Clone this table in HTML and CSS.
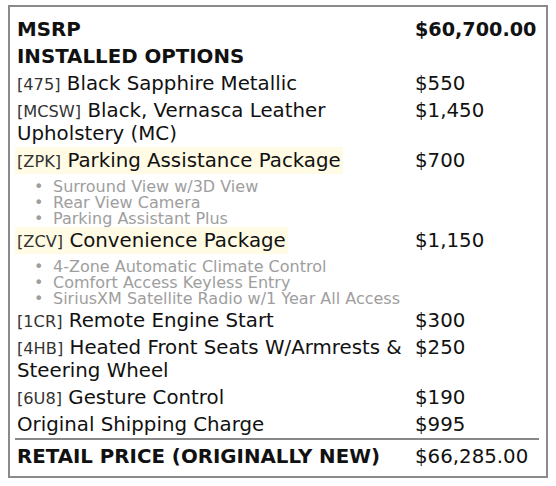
FILE: index.html
```html
<!DOCTYPE html>
<html>
<head>
<meta charset="utf-8">
<link rel="stylesheet" href="styles.css">
</head>
<body>
<div class="box">
  <div class="sheet">
    <div class="row head"><div class="name">MSRP</div><div class="price">$60,700.00</div></div>
    <div class="row head"><div class="name">INSTALLED OPTIONS</div><div class="price"></div></div>
    <div class="row"><div class="name"><span class="code">[475]</span> Black Sapphire Metallic</div><div class="price">$550</div></div>
    <div class="row"><div class="name"><span class="code">[MCSW]</span> Black, Vernasca Leather Upholstery (MC)</div><div class="price">$1,450</div></div>
    <div class="row pkg">
      <div class="name">
        <span class="hl"><span class="code">[ZPK]</span> Parking Assistance Package</span>
        <ul class="feats">
          <li>Surround View w/3D View</li>
          <li>Rear View Camera</li>
          <li>Parking Assistant Plus</li>
        </ul>
      </div>
      <div class="price">$700</div>
    </div>
    <div class="row pkg">
      <div class="name">
        <span class="hl"><span class="code">[ZCV]</span> Convenience Package</span>
        <ul class="feats">
          <li>4-Zone Automatic Climate Control</li>
          <li>Comfort Access Keyless Entry</li>
          <li>SiriusXM Satellite Radio w/1 Year All Access</li>
        </ul>
      </div>
      <div class="price">$1,150</div>
    </div>
    <div class="row"><div class="name"><span class="code">[1CR]</span> Remote Engine Start</div><div class="price">$300</div></div>
    <div class="row"><div class="name"><span class="code">[4HB]</span> Heated Front Seats W/Armrests &amp; Steering Wheel</div><div class="price">$250</div></div>
    <div class="row"><div class="name"><span class="code">[6U8]</span> Gesture Control</div><div class="price">$190</div></div>
    <div class="row"><div class="name">Original Shipping Charge</div><div class="price">$995</div></div>
    <div class="row total"><div class="name">RETAIL PRICE (ORIGINALLY NEW)</div><div class="price">$66,285.00</div></div>
  </div>
</div>
</body>
</html>
```
FILE: styles.css
```css
body {
  margin: 0;
  background: #fff;
  font-family: "DejaVu Sans", sans-serif;
  color: #111;
}
.box {
  margin: 5px 0 0 8px;
  width: 540px;
  height: 473px;
  box-sizing: border-box;
  border: 2px solid #8a8a8a;
  padding: 9px 0 0 5px;
}
.sheet {
  width: 524px;
}
.row {
  display: grid;
  grid-template-columns: 398px 1fr;
  font-size: 19.8px;
  line-height: 23px;
}
.name, .price {
  padding: 2px;
}
.price {
  white-space: nowrap;
}
.head {
  font-weight: bold;
}
.head .price {
  font-size: 19.2px;
}
.total .name {
  font-weight: bold;
}
.code {
  font-size: 16.2px;
  line-height: 1;
  color: #333;
}
.pkg .name {
  display: flex;
  flex-direction: column;
  align-items: flex-start;
}
.hl {
  background: #fffbe5;
  margin: -2px;
  padding: 2px;
}
.feats {
  list-style: none;
  margin: 7px 0 -2px;
  padding: 0 0 0 17px;
  font-size: 16px;
  line-height: 16px;
  color: #9e9e9e;
}
.feats li::before {
  content: "\2022";
  display: inline-block;
  width: 19px;
}
.total {
  border-top: 2px solid #888;
  padding-top: 3px;
}
```
